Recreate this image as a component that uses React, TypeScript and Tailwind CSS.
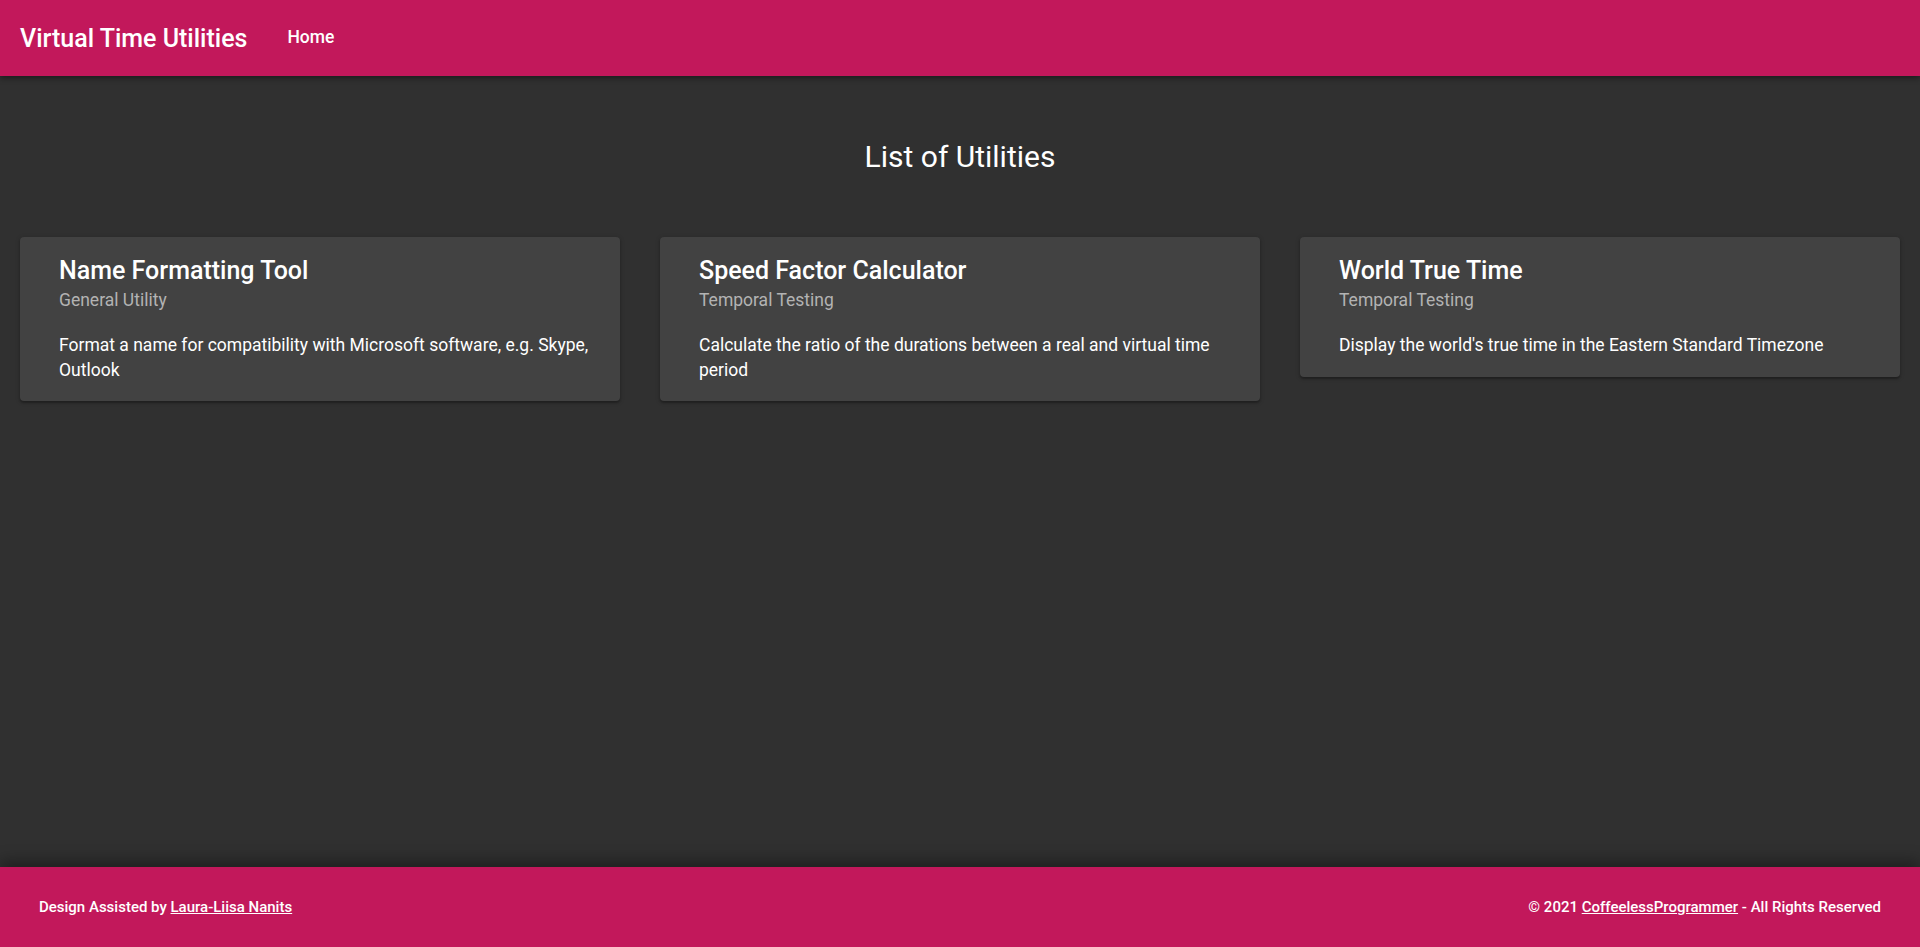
import React from "react";

const cards = [
  {
    title: "Name Formatting Tool",
    subtitle: "General Utility",
    desc: "Format a name for compatibility with Microsoft software, e.g. Skype, Outlook",
  },
  {
    title: "Speed Factor Calculator",
    subtitle: "Temporal Testing",
    desc: "Calculate the ratio of the durations between a real and virtual time period",
  },
  {
    title: "World True Time",
    subtitle: "Temporal Testing",
    desc: "Display the world's true time in the Eastern Standard Timezone",
  },
];

export default function App() {
  return (
    <div
      className="min-h-screen flex flex-col bg-[#303030] text-white"
      style={{ fontFamily: "Roboto, 'Noto Sans', sans-serif" }}
    >
      <header className="relative z-10 h-[76px] flex items-center px-5 bg-[#c2185b] shadow-[0_2px_6px_rgba(0,0,0,0.45)]">
        <span className="text-[25px] font-medium leading-none">Virtual Time Utilities</span>
        <a className="ml-10 text-[17.5px] font-medium leading-none">Home</a>
      </header>

      <main className="flex-1 flex flex-col">
        <h1 className="mt-[63px] text-center text-[30px] leading-[36px] font-normal">
          List of Utilities
        </h1>
        <div className="mt-[62px] px-5 grid grid-cols-3 gap-10 items-start">
          {cards.map((c) => (
            <div
              key={c.title}
              className="bg-[#424242] rounded-[4px] pl-[39px] pr-4 pt-[18px] pb-[19px] shadow-[0_2px_2px_rgba(0,0,0,0.25),0_1px_5px_rgba(0,0,0,0.2)]"
            >
              <div className="text-[25px] leading-[32px] font-medium">{c.title}</div>
              <div className="mt-[1px] text-[17.5px] leading-[24px] text-[#b3b3b3]">{c.subtitle}</div>
              <p className="mt-[21px] text-[17.5px] leading-[24.5px]">{c.desc}</p>
            </div>
          ))}
        </div>
      </main>

      <footer className="relative h-[80px] flex items-center justify-between px-[39px] bg-[#c2185b] shadow-[0_-6px_14px_rgba(0,0,0,0.35)] text-[15px] font-medium">
        <span>
          Design Assisted by <a className="underline">Laura-Liisa Nanits</a>
        </span>
        <span>
          © 2021 <a className="underline">CoffeelessProgrammer</a> - All Rights Reserved
        </span>
      </footer>
    </div>
  );
}
